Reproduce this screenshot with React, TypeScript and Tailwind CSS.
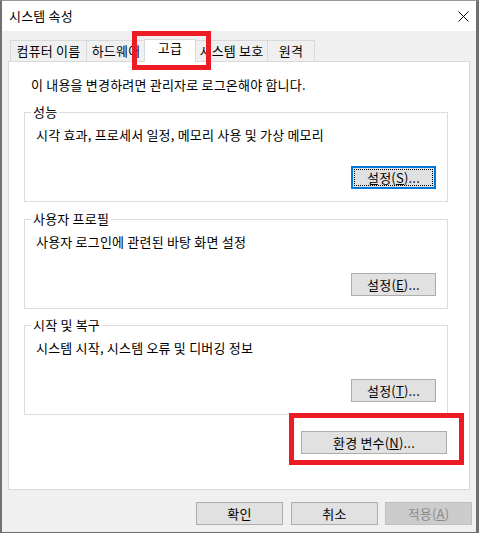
function Btn({
  children,
  className = "",
  focused = false,
  disabled = false,
}: {
  children: React.ReactNode;
  className?: string;
  focused?: boolean;
  disabled?: boolean;
}) {
  const base = "flex h-[23px] items-center justify-center leading-[16px]";
  const look = disabled
    ? "bg-[#cccccc] border border-[#bfbfbf] text-[#8a8a8a]"
    : focused
      ? "bg-[#e1e1e1] border-2 border-[#0078d7] outline-1 outline-dotted outline-black outline-offset-[-4px]"
      : "bg-[#e1e1e1] border border-[#adadad]";
  return <div className={`${base} ${look} ${className}`}>{children}</div>;
}

function Group({
  title,
  desc,
  button,
  focused = false,
  className = "",
}: {
  title: string;
  desc: string;
  button: React.ReactNode;
  focused?: boolean;
  className?: string;
}) {
  return (
    <div className={`relative ml-[15px] h-[90px] w-[424px] border border-[#dcdcdc] pt-[14px] pb-[12px] ${className}`}>
      <span className="absolute top-[-9px] left-[6px] bg-white px-[2px] leading-[16px]">{title}</span>
      <div className="pl-[11px] leading-[16px]">{desc}</div>
      <div className="mt-[23px] flex justify-end pr-[11px]">
        <Btn focused={focused} className="w-[85px]">
          {button}
        </Btn>
      </div>
    </div>
  );
}

const TABS = [
  { label: "컴퓨터 이름", w: "w-[77px] ml-[2px]" },
  { label: "하드웨어", w: "w-[60px] -ml-px" },
  { label: "고급", w: "w-[52px] -ml-[2px]", active: true },
  { label: "시스템 보호", w: "w-[73px] -ml-px" },
  { label: "원격", w: "w-[48px] -ml-px" },
];

export default function App() {
  return (
    <div className="relative h-[533px] w-[479px] font-['Noto_Sans_CJK_KR',sans-serif] text-[13px] tracking-[0.2px] text-black">
      <div className="flex h-full w-full flex-col border-t border-b border-l-2 border-r-[3px] border-[#707070] border-t-[#9a9a9a] bg-[#f0f0f0]">
        {/* title bar */}
        <div className="flex h-[30px] items-center justify-between bg-white pr-[7px] pl-[7px]">
          <span className="leading-[16px]">시스템 속성</span>
          <svg width="11" height="11" viewBox="0 0 11 11" className="mt-[1px]">
            <path d="M0.5 0.5L10.5 10.5M10.5 0.5L0.5 10.5" stroke="#000" strokeWidth="1" />
          </svg>
        </div>

        <div className="pl-[6px]">
          {/* tabs */}
          <div className="mt-[8px] flex h-[22px] items-end">
            {TABS.map((t) =>
              t.active ? (
                <div
                  key={t.label}
                  className={`relative z-10 -mb-px flex h-[23px] justify-center border-x border-t border-[#d9d9d9] bg-white leading-[16px] ${t.w}`}
                >
                  {t.label}
                </div>
              ) : (
                <div
                  key={t.label}
                  className={`flex h-[21px] justify-center overflow-hidden border-x border-t border-[#d9d9d9] bg-[#f0f0f0] pt-[2px] leading-[16px] whitespace-nowrap ${t.w}`}
                >
                  {t.label}
                </div>
              ),
            )}
          </div>

          {/* panel */}
          <div className="h-[429px] w-[462px] border border-[#d9d9d9] bg-white">
            <div className="pt-[15px] pl-[22px] leading-[16px]">이 내용을 변경하려면 관리자로 로그온해야 합니다.</div>
            <Group
              className="mt-[19px]"
              title="성능"
              desc="시각 효과, 프로세서 일정, 메모리 사용 및 가상 메모리"
              focused
              button={
                <>
                  설정(<span className="underline">S</span>)...
                </>
              }
            />
            <Group
              className="mt-[17px]"
              title="사용자 프로필"
              desc="사용자 로그인에 관련된 바탕 화면 설정"
              button={
                <>
                  설정(<span className="underline">E</span>)...
                </>
              }
            />
            <Group
              className="mt-[16px]"
              title="시작 및 복구"
              desc="시스템 시작, 시스템 오류 및 디버깅 정보"
              button={
                <>
                  설정(<span className="underline">T</span>)...
                </>
              }
            />
            <div className="mt-[16px] flex justify-end pr-[22px]">
              <Btn className="w-[146px]">
                환경 변수(<span className="underline">N</span>)...
              </Btn>
            </div>
          </div>
        </div>

        {/* bottom buttons */}
        <div className="mt-[12px] flex justify-end pr-[4px]">
          <Btn className="w-[87px]">확인</Btn>
          <Btn className="ml-[8px] w-[87px]">취소</Btn>
          <Btn disabled className="ml-[7px] w-[87px]">
            적용(<span className="underline">A</span>)
          </Btn>
        </div>
      </div>

      {/* red annotation boxes */}
      <div className="absolute top-[31px] left-[132px] h-[39px] w-[79px] border-[5px] border-[#ed1c24]" />
      <div className="absolute top-[413px] left-[289px] h-[52px] w-[175px] border-[5px] border-[#ed1c24]" />
    </div>
  );
}
